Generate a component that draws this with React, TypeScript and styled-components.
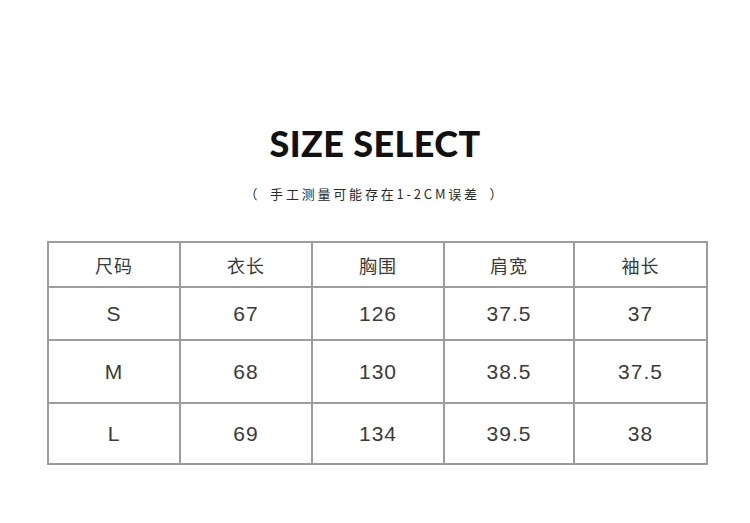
import React from "react";
import styled, { createGlobalStyle } from "styled-components";

const GlobalStyle = createGlobalStyle`
  html, body {
    margin: 0;
    padding: 0;
    background: #fff;
  }
  * {
    box-sizing: border-box;
  }
`;

const Page = styled.div`
  width: 750px;
  height: 523px;
  background: #fff;
  padding-top: 121px;
  display: flex;
  flex-direction: column;
  align-items: center;
  font-family: "Liberation Sans", "Noto Sans CJK SC", sans-serif;
  color: #333;
`;

const Title = styled.h1`
  margin: 0;
  font-family: Lato, "Noto Sans", sans-serif;
  font-weight: 900;
  font-size: 36px;
  line-height: 44px;
  letter-spacing: 0.4px;
  color: #111;
`;

const Note = styled.p`
  margin: 20px 0 0;
  font-family: "Noto Sans CJK SC", sans-serif;
  font-size: 13px;
  line-height: 18px;
  letter-spacing: 2.8px;
  word-spacing: 4px;
  color: #2a2a2a;
`;

const Table = styled.div`
  margin-top: 38px;
  align-self: flex-start;
  margin-left: 47px;
  display: grid;
  grid-template-columns: 132px 132px 132px 130px 133px;
  grid-template-rows: 45px 53px 63px 61px;
  border-top: 2px solid #9c9c9c;
  border-left: 2px solid #9c9c9c;
`;

const Cell = styled.div<{ $head?: boolean }>`
  display: flex;
  align-items: center;
  justify-content: center;
  border-right: 2px solid #9c9c9c;
  border-bottom: 2px solid #9c9c9c;
  font-family: ${({ $head }) =>
    $head ? `"Noto Sans CJK SC", sans-serif` : `"Liberation Sans", sans-serif`};
  font-size: ${({ $head }) => ($head ? "18px" : "21px")};
  letter-spacing: 1px;
  color: #3a3a3a;
  padding-top: ${({ $head }) => ($head ? "0" : "1px")};
`;

const head = ["尺码", "衣长", "胸围", "肩宽", "袖长"];
const rows = [
  ["S", "67", "126", "37.5", "37"],
  ["M", "68", "130", "38.5", "37.5"],
  ["L", "69", "134", "39.5", "38"],
];

export default function App() {
  return (
    <>
      <GlobalStyle />
      <Page>
        <Title>SIZE SELECT</Title>
        <Note>（ 手工测量可能存在1-2CM误差 ）</Note>
        <Table>
          {head.map((h) => (
            <Cell $head key={h}>
              {h}
            </Cell>
          ))}
          {rows.map((r) =>
            r.map((v, i) => <Cell key={r[0] + i}>{v}</Cell>)
          )}
        </Table>
      </Page>
    </>
  );
}
